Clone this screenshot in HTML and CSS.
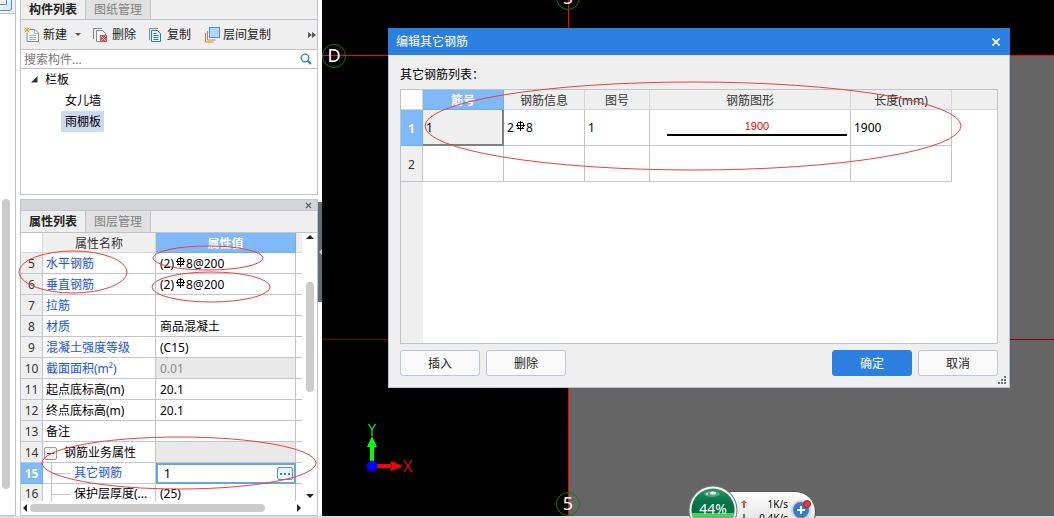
FILE: index.html
```html
<!DOCTYPE html>
<html lang="zh-CN">
<head>
<meta charset="utf-8">
<title>编辑其它钢筋</title>
<link rel="stylesheet" href="styles.css">
</head>
<body>
<svg class="defs" aria-hidden="true">
  <symbol id="rebar" viewBox="0 0 9 10">
    <path d="M4.500 0v10M0 4.500h9M1 7.500h7M1.500 2v4M7.500 2v4M2 1.500h5M2.500 6v2M6.500 6v2" fill="none" stroke="currentColor" stroke-width="1"/>
  </symbol>
</svg>
<div class="app">
  <div class="main">
    <div class="strip">
      <div class="strip-head">
        <svg width="13" height="13" viewBox="0 0 13 13"><path d="M0 10.500h9q2.500 0 2.500-2.500V0" fill="#dcecfb" stroke="#4a90d9"/><path d="M0 4.500h6.500V0" fill="none" stroke="#4a90d9"/></svg>
      </div>
      <div class="strip-body"><div class="strip-thumb"></div></div>
    </div>

    <div class="side">
      <section class="panel components">
        <div class="tabs">
          <button class="tab active">构件列表</button>
          <button class="tab">图纸管理</button>
        </div>
        <div class="toolbar">
          <button class="tool new">
            <svg width="16" height="16" viewBox="0 0 16 16"><path d="M3 2.500h8l3.500 3.500v8.500H3z" fill="#fafbfc" stroke="#7f8a94"/><path d="M10.500 2.500v4h4M5 8.500h7M5 10.500h7M5 12.500h7" fill="none" stroke="#aab2ba"/><path d="M0 0h6v6H0z" fill="#fff"/><path d="M3 0v6M0 3h6M.5.5l5 5M5.500.5l-5 5" stroke="#f49a1c"/></svg>
            <span>新建</span><i class="caret"></i>
          </button>
          <button class="tool del">
            <svg width="16" height="16" viewBox="0 0 16 16"><path d="M1.500 12V1.500H10" fill="none" stroke="#7f8a94"/><path d="M4.500 3.500h6l3 3v8h-9z" fill="#fafbfc" stroke="#7f8a94"/><rect x="8" y="8" width="7" height="7" fill="#d0504c"/><path d="M9.500 9.500l4 4M13.500 9.500l-4 4" stroke="#fff" stroke-width="1"/></svg>
            <span>删除</span>
          </button>
          <button class="tool copy">
            <svg width="16" height="16" viewBox="0 0 16 16"><path d="M2.500 13V1.500H11" fill="none" stroke="#7f8a94"/><path d="M4.500 3.500h6l3 3v8h-9z" fill="#eaf4ff" stroke="#2876bd"/><path d="M6.500 6.500h3M6.500 8.500h5M6.500 10.500h5M6.500 12.500h5" stroke="#2876bd"/></svg>
            <span>复制</span>
          </button>
          <button class="tool layer">
            <svg width="16" height="16" viewBox="0 0 16 16"><path d="M1.500 6v9h8" fill="none" stroke="#ee7b2d"/><path d="M3.500 4v9h8" fill="none" stroke="#ee7b2d"/><rect x="5.500" y=".5" width="10" height="10" fill="#b5d5fb" stroke="#438fe0"/></svg>
            <span>层间复制</span>
          </button>
          <button class="more" aria-label="更多"><svg width="8" height="6" viewBox="0 0 8 6"><path d="M0 0l4 3-4 3zM4 0l4 3-4 3z" fill="#555"/></svg></button>
        </div>
        <div class="search">
          <input type="text" placeholder="搜索构件..." aria-label="搜索构件">
          <svg width="12" height="12" viewBox="0 0 12 12"><circle cx="5" cy="5" r="3.800" fill="none" stroke="#2286c7" stroke-width="1.300"/><path d="M7.800 7.800L11 11" stroke="#2286c7" stroke-width="2"/></svg>
        </div>
        <ul class="tree">
          <li><svg width="7" height="7" viewBox="0 0 7 7"><path d="M6.500 0v6.500H0z" fill="#333"/></svg>栏板
            <ul>
              <li><span>女儿墙</span></li>
              <li><span class="picked">雨棚板</span></li>
            </ul>
          </li>
        </ul>
      </section>

      <section class="panel properties">
        <div class="dock"><button aria-label="关闭"><svg width="7" height="7" viewBox="0 0 7 7"><path d="M1 1l5 5M6 1L1 6" stroke="#666" stroke-width="1.300"/></svg></button></div>
        <div class="tabs">
          <button class="tab active">属性列表</button>
          <button class="tab">图层管理</button>
        </div>
        <div class="scroller">
          <div class="clip">
            <table class="props">
              <colgroup><col class="c-no"><col class="c-name"><col class="c-value"><col></colgroup>
              <thead><tr><th></th><th>属性名称</th><th class="on">属性值</th><th></th></tr></thead>
              <tbody>
                <tr><th>5</th><td class="blue">水平钢筋</td><td>(2)<svg class="rebar"><use href="#rebar"/></svg>8@200</td><td></td></tr>
                <tr><th>6</th><td class="blue">垂直钢筋</td><td>(2)<svg class="rebar"><use href="#rebar"/></svg>8@200</td><td></td></tr>
                <tr><th>7</th><td class="blue">拉筋</td><td></td><td></td></tr>
                <tr><th>8</th><td class="blue">材质</td><td>商品混凝土</td><td></td></tr>
                <tr><th>9</th><td class="blue">混凝土强度等级</td><td>(C15)</td><td></td></tr>
                <tr><th>10</th><td class="blue">截面面积(m²)</td><td class="off">0.01</td><td></td></tr>
                <tr><th>11</th><td>起点底标高(m)</td><td>20.1</td><td></td></tr>
                <tr><th>12</th><td>终点底标高(m)</td><td>20.1</td><td></td></tr>
                <tr><th>13</th><td>备注</td><td></td><td></td></tr>
                <tr><th>14</th><td class="group"><button class="fold" aria-label="折叠"></button>钢筋业务属性</td><td class="off"></td><td></td></tr>
                <tr><th class="on">15</th><td class="blue child">其它钢筋</td><td class="editing"><div class="editor"><input type="text" value="1" aria-label="其它钢筋"><button aria-label="编辑"><svg width="10" height="2" viewBox="0 0 10 2"><path d="M0 0h2v2H0zM4 0h2v2H4zM8 0h2v2H8z" fill="#3787cf"/></svg></button></div></td><td></td></tr>
                <tr class="last"><th>16</th><td class="child">保护层厚度(...</td><td>(25)</td><td></td></tr>
              </tbody>
            </table>
          </div>
          <div class="vbar">
            <svg width="8" height="4" viewBox="0 0 8 4"><path d="M0 4l4-4 4 4z" fill="#222"/></svg>
            <div class="vtrack"><div class="vthumb"></div></div>
            <svg width="8" height="4" viewBox="0 0 8 4"><path d="M0 0l4 4 4-4z" fill="#222"/></svg>
          </div>
        </div>
        <div class="hbar">
          <svg width="4" height="8" viewBox="0 0 4 8"><path d="M4 0L0 4l4 4z" fill="#222"/></svg>
          <div class="htrack"><div class="hthumb"></div></div>
          <svg width="4" height="8" viewBox="0 0 4 8"><path d="M0 0l4 4-4 4z" fill="#222"/></svg>
        </div>
      </section>
    </div>

    <div class="splitter"><button aria-label="收起"><svg width="3" height="6" viewBox="0 0 3 6"><path d="M3 0L0 3l3 3z" fill="#c5ccd3"/></svg></button></div>

    <div class="canvas">
      <svg class="drawing" width="2000" height="1200" viewBox="0 0 2000 1200">
        <rect x="247" y="55" width="1753" height="1145" fill="#656565"/>
        <path d="M0 339.500h2000" stroke="#800000"/>
        <path d="M0 55.500h2000M246.500 0v1200" stroke="#f00"/>
        <g fill="none" stroke="#080"><circle cx="12" cy="56" r="11.500"/><circle cx="246" cy="-2" r="11.500"/><circle cx="246" cy="504" r="11.500"/></g>
        <g class="axis" fill="#fff"><text x="12" y="62">D</text><text x="246" y="4">5</text><text x="246" y="510">5</text></g>
        <path d="M48 440h4v22h-4zM50 436l5 11H45z" fill="#0f0"/>
        <path d="M54 464h16v4H54zM81 466l-12-5v10z" fill="#f00"/>
        <circle cx="50" cy="466" r="5.500" fill="#00f"/>
        <path d="M46.500 424l3.500 5.500 3.500-5.500M50 429v7" fill="none" stroke="#0f0" stroke-width="1.300"/>
        <path d="M82 460l8 12M90 460l-8 12" fill="none" stroke="#f00" stroke-width="1.300"/>
      </svg>

      <div class="dialog" role="dialog" aria-labelledby="dlg-title">
        <header class="dialog-title"><span id="dlg-title">编辑其它钢筋</span><button aria-label="关闭"><svg width="8" height="8" viewBox="0 0 8 8"><path d="M.5.5l7 7M7.500.5l-7 7" stroke="#fff" stroke-width="1.600"/></svg></button></header>
        <div class="dialog-body">
          <div class="caption">其它钢筋列表：</div>
          <div class="frame">
            <table class="bars">
              <colgroup><col class="b-no"><col class="b-id"><col class="b-info"><col class="b-fig"><col class="b-shape"><col class="b-len"><col></colgroup>
              <thead><tr><th class="corner"></th><th class="on">筋号</th><th>钢筋信息</th><th>图号</th><th>钢筋图形</th><th>长度(mm)</th><th class="rest"></th></tr></thead>
              <tbody>
                <tr><th class="on">1</th><td class="current">1</td><td>2<svg class="rebar"><use href="#rebar"/></svg>8</td><td>1</td><td><div class="shape">1900</div></td><td>1900</td><td class="rest"></td></tr>
                <tr><th>2</th><td></td><td></td><td></td><td></td><td></td><td class="rest"></td></tr>
              </tbody>
            </table>
            <div class="gutter"></div>
          </div>
          <div class="actions">
            <button class="btn">插入</button>
            <button class="btn">删除</button>
            <button class="btn primary">确定</button>
            <button class="btn">取消</button>
          </div>
        </div>
        <svg class="grip" width="8" height="8" viewBox="0 0 8 8"><path d="M6 0h2v2H6zM3 3h2v2H3zM6 3h2v2H6zM0 6h2v2H0zM3 6h2v2H3zM6 6h2v2H6z" fill="#6d737a"/></svg>
      </div>
    </div>
  </div>
  <div class="status"></div>
</div>

<div class="meter">
  <div class="speeds">
    <div class="speed"><svg width="6" height="8" viewBox="0 0 6 8"><path d="M3 0l3 3H4v5H2V3H0z" fill="#e8503a"/></svg><span>1K/s</span></div>
    <div class="speed"><svg width="6" height="8" viewBox="0 0 6 8"><path d="M3 8l3-3H4V0H2v5H0z" fill="#1f9a52"/></svg><span>0.4K/s</span></div>
  </div>
  <svg class="boost" width="22" height="24" viewBox="0 0 22 24"><circle cx="10" cy="13" r="10" fill="#d3d5d8"/><circle cx="10" cy="13" r="8" fill="#347bd2"/><path d="M10 9v8M6 13h8" stroke="#fff" stroke-width="2"/><circle cx="16" cy="7" r="3.500" fill="#e23a3a" stroke="#b31c1c"/></svg>
  <div class="bubble">
    <svg width="50" height="50" viewBox="0 0 50 50">
      <defs><linearGradient id="orb" x1="0" y1="0" x2="0" y2="1"><stop offset="0" stop-color="#2c9166"/><stop offset=".35" stop-color="#047146"/><stop offset="1" stop-color="#05653f"/></linearGradient><clipPath id="orbclip"><circle cx="25" cy="25" r="21.500"/></clipPath></defs>
      <circle cx="25" cy="25" r="24.500" fill="#777"/><circle cx="25" cy="25" r="23.500" fill="#f1f3f2"/><circle cx="25" cy="25" r="21.500" fill="url(#orb)"/>
      <rect y="28" width="50" height="22" fill="#4dcd60" clip-path="url(#orbclip)"/>
      <ellipse cx="24" cy="9" rx="8" ry="3" fill="#fff" opacity=".25"/><ellipse cx="25" cy="8" rx="3" ry="1.500" fill="#fff" opacity=".9"/><circle cx="19" cy="9" r="1" fill="#fff" opacity=".8"/>
    </svg>
    <span>44%</span>
  </div>
</div>

<svg class="marks" width="1054" height="518" viewBox="0 0 1054 518" aria-hidden="true">
  <g fill="none" stroke="#f23c3c">
    <ellipse cx="73" cy="272" rx="54" ry="21"/>
    <ellipse cx="208" cy="258" rx="55" ry="12"/>
    <ellipse cx="211" cy="287" rx="59" ry="15"/>
    <ellipse cx="179" cy="463" rx="137" ry="26"/>
    <ellipse cx="693" cy="126" rx="268" ry="44"/>
  </g>
</svg>
</body>
</html>
```

FILE: styles.css
```css
* { box-sizing: border-box; }
body {
  margin: 0;
  overflow: hidden;
  background: #fff;
  color: #111;
  font: 12px/16px "Noto Sans", "Noto Sans CJK SC", sans-serif;
}
button, input { font: inherit; color: inherit; margin: 0; padding: 0; border: 0; background: none; }
button { display: flex; align-items: center; justify-content: center; white-space: nowrap; }
svg { display: block; flex: none; }
ul { list-style: none; margin: 0; padding: 0; }
table { border-collapse: separate; border-spacing: 0; table-layout: fixed; width: 100%; }
th, td { padding: 0; font-weight: normal; white-space: nowrap; overflow: hidden; }
.defs { position: absolute; width: 0; height: 0; }
.rebar { display: inline-block; width: 9px; height: 10px; margin: 0 1px 0 2px; vertical-align: 1px; color: #000; }

.app { display: flex; flex-direction: column; height: 100vh; }
.main { display: flex; flex: 1; min-height: 0; }
.status { height: 2px; background: #dcdddf; }

/* left edge */
.strip { display: flex; flex-direction: column; width: 16px; border-right: 1px solid #bfc2c8; border-bottom: 1px solid #bfc2c8; }
.strip-head { height: 14px; background: #f0f0f0; border-bottom: 1px solid #bfc2c8; }
.strip-body { flex: 1; padding: 185px 4px 26px 2px; }
.strip-thumb { width: 8px; height: 100%; border-radius: 4px; background: #cbcbcb; }

/* side panels */
.side { display: flex; flex-direction: column; gap: 4px; width: 302px; padding-left: 4px; }
.panel { display: flex; flex-direction: column; border: 1px solid #c0c3c9; min-height: 0; }
.components { height: 195px; border-top: 0; }
.properties { flex: 1; }
.tabs { display: flex; flex: none; height: 20px; background: #efefef; border-bottom: 1px solid #c0c3c9; }
.properties .tabs { height: 22px; }
.tab { width: 65px; border-right: 1px solid #c0c3c9; background: #e1e1e1; color: #828282; }
.tab.active { background: #efefef; color: #222; font-weight: bold; }
.toolbar { display: flex; align-items: center; flex: none; height: 30px; padding-left: 3px; background: #efefef; border-bottom: 1px solid #c0c3c9; color: #222; }
.tool { gap: 3px; margin-right: 11px; }
.tool.copy { margin-right: 13px; }
.tool.del, .tool.copy { gap: 4px; }
.caret { margin-left: 5px; border: 3px solid transparent; border-top-color: #555; border-bottom: 0; }
.more { margin-left: auto; padding-right: 1px; }
.search { display: flex; align-items: center; flex: none; height: 19px; padding: 0 5px 0 3px; border-bottom: 1px solid #c0c3c9; }
.search input { flex: 1; min-width: 0; height: 18px; padding-top: 1px; outline: 0; }
.search input::placeholder { color: #777; opacity: 1; }
.tree { line-height: 21px; color: #000; }
.tree > li { padding-left: 24px; }
.tree > li > svg { float: left; margin: 7px 0 0 -14px; }
.tree ul { padding-left: 16px; }
.tree span { display: inline-block; padding: 0 3px 0 4px; }
.tree .picked { background: #ccdaf0; }

/* property grid */
.dock { display: flex; justify-content: flex-end; flex: none; height: 11px; padding-right: 5px; background: #d4d5d9; border-bottom: 1px solid #c0c3c9; }
.scroller { display: flex; flex: 1; min-height: 0; }
.clip { flex: 1; overflow: hidden; }
.c-no { width: 22px; }
.c-name { width: 113px; }
.c-value { width: 140px; }
.props td, .props th { height: 21px; line-height: 18px; padding-top: 2px; border-right: 1px solid #c3c5ca; border-bottom: 1px solid #c3c5ca; }
.props td { padding-left: 3px; color: #000; }
.props td + td { padding-left: 4px; }
.props tr > :last-child { border-right: 0; }
.props th { background: #efefef; color: #333; }
.props thead th { height: 20px; line-height: 17px; border-right-color: #d7d8db; border-bottom-color: #d7d8db; }
.props thead th:first-child { background: #fff; }
.props .on, .bars .on { background: #80b9f9; color: #fff; font-weight: bold; border-color: #6eabef; }
.props .blue { color: #1553f5; }
.props .off { background: #e9e9e9; color: #8c8c8c; }
.props .group { display: flex; align-items: center; gap: 7px; padding-left: 1px; }
.fold { width: 13px; height: 13px; border: 1px solid #999; border-radius: 2px; background: #f3f3f3; }
.fold::before { content: ""; width: 7px; height: 1px; background: #333; }
.props .child { padding-top: 0; line-height: 20px; padding-left: 8px; }
.props .child::before { content: ""; display: inline-block; width: 18px; height: 20px; margin-right: 4px; vertical-align: top; border-left: 1px solid #c3c5ca; background: linear-gradient(#c3c5ca, #c3c5ca) 0 10px / 18px 1px no-repeat; }
.props .last th, .props .last td { padding-top: 0; }
.props td.editing { padding: 0; border: 0; }
.editor { display: flex; align-items: center; height: 21px; padding: 0 1px 0 6px; border: 2px solid #69a5e4; }
.editor input { flex: 1; min-width: 0; height: 16px; outline: 0; }
.editor button { width: 16px; height: 13px; border: 1px solid #4d96d9; border-radius: 2px; background: #eaf4fd; }
.vbar { display: flex; flex-direction: column; align-items: center; width: 15px; padding: 2px 0 3px; }
.vtrack { flex: 1; padding-top: 43px; }
.vthumb { width: 8px; height: 110px; border-radius: 4px; background: #cbcbcb; }
.hbar { display: flex; align-items: center; flex: none; height: 14px; padding: 0 16px 0 2px; }
.htrack { flex: 1; padding: 0 32px 0 3px; }
.hthumb { height: 8px; border-radius: 4px; background: #cbcbcb; }

.splitter { width: 4px; padding-top: 202px; }
.splitter button { width: 4px; height: 100px; background: #626d79; }

/* drawing area */
.canvas { position: relative; flex: 1; overflow: hidden; background: #000; }
.drawing { position: absolute; left: 0; top: 0; }
.axis { font: 18px "Noto Sans", sans-serif; text-anchor: middle; }

.dialog { position: absolute; left: 66px; top: 28px; width: 622px; background: #efefef; border: 1px solid #bac4d0; border-top: 0; }
.dialog-title { display: flex; align-items: center; justify-content: space-between; height: 27px; padding: 0 10px 0 8px; background: #2c7fe1; color: #fff; margin: 0 -1px; }
.dialog-body { padding: 11px; }
.caption { height: 23px; line-height: 18px; color: #000; }
.frame { display: flex; flex-direction: column; height: 255px; border: 1px solid #c0c3c9; background: #fff; }
.gutter { flex: 1; width: 22px; background: #efefef; }
.b-no { width: 22px; }
.b-id, .b-info { width: 81px; }
.b-fig { width: 65px; }
.b-shape { width: 201px; }
.b-len { width: 101px; }
.bars th, .bars td { border-right: 1px solid #c3c5ca; border-bottom: 1px solid #c3c5ca; }
.bars th { background: #efefef; color: #333; }
.bars thead th { height: 20px; padding-top: 2px; line-height: 17px; border-color: #d5d6d9; }
.bars tbody th, .bars td { height: 36px; }
.bars tbody th { padding-top: 2px; }
.bars td { padding-left: 3px; color: #000; }
.bars .on { color: #fff; border-color: #6eabef; }
.bars thead .corner { background: #fff; }
.bars .rest { border-right: 0; }
.bars td.rest { border-bottom: 0; }
.bars .current { padding-top: 2px; background: #efefef; border-right: 2px solid #808080; border-bottom: 2px solid #808080; }
.shape { margin: 0 3px 0 14px; padding-bottom: 1px; border-bottom: 2px solid #000; color: #f00000; font: 11px/14px "Liberation Sans", sans-serif; text-align: center; }
.actions { display: flex; gap: 6px; margin-top: 6px; }
.btn { width: 80px; height: 26px; padding-top: 2px; border: 1px solid #bdc6d7; border-radius: 3px; background: #fafafa; color: #222; }
.btn.primary { margin-left: auto; border-color: #2c7fe1; background: #2c7fe1; color: #fff; }
.grip { position: absolute; right: 3px; bottom: 3px; }

/* network meter floating over the window */
.meter { position: absolute; left: 712px; top: 491px; display: flex; width: 104px; height: 42px; padding: 5px 2px 0 28px; border: 1px solid #555; border-radius: 21px; background: linear-gradient(#fff, #dadada); }
.speeds { flex: 1; line-height: 14px; font-size: 10px; color: #000; }
.speed { display: flex; align-items: center; justify-content: space-between; }
.boost { margin-left: 3px; }
.bubble { position: absolute; left: -25px; top: -7px; }
.bubble span { position: absolute; inset: 0; line-height: 48px; text-align: center; color: #fff; font-size: 14px; }

.marks { position: absolute; left: 0; top: 0; pointer-events: none; }
```
